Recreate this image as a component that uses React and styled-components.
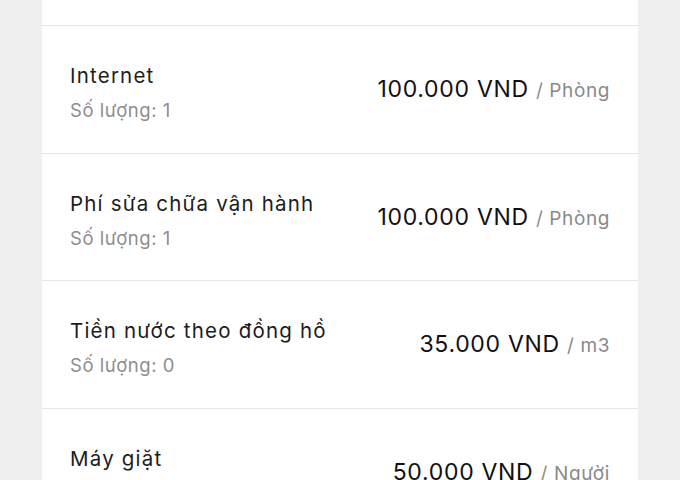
import React from 'react'
import styled, { createGlobalStyle } from 'styled-components'

const GlobalStyle = createGlobalStyle`
  html, body {
    margin: 0;
    padding: 0;
    background: #efefef;
    overflow: hidden;
  }
  body {
    font-family: Inter, "Liberation Sans", sans-serif;
    -webkit-font-smoothing: antialiased;
  }
`

const Page = styled.div`
  width: 680px;
  height: 480px;
  overflow: hidden;
  padding: 0 42px;
  box-sizing: border-box;
`

const Card = styled.div`
  background: #ffffff;
  display: flex;
  flex-direction: column;
`

// bottom edge of the item scrolled above the fold
const TopEdge = styled.div`
  height: 25px;
  border-bottom: 1px solid #e6e6e6;
`

const Row = styled.div`
  height: 126.5px;
  border-bottom: 1px solid #e6e6e6;
  display: flex;
  align-items: center;
  justify-content: space-between;
  padding: 0 28px;
`

const Info = styled.div`
  display: flex;
  flex-direction: column;
  gap: 9px;
  padding-top: 7px;
`

const Title = styled.div`
  font-size: 20.5px;
  letter-spacing: 1.2px;
  color: #1c1c1c;
  line-height: 26px;
`

const Qty = styled.div`
  font-size: 18.5px;
  letter-spacing: 0.55px;
  color: #8e8e8e;
  line-height: 24px;
`

const Price = styled.div`
  font-size: 23px;
  letter-spacing: 0.7px;
  color: #111111;
  white-space: nowrap;
`

const Unit = styled.span`
  font-size: 19px;
  letter-spacing: 0.6px;
  color: #8a8a8a;
`

const fees = [
  { name: 'Internet', qty: 1, price: '100.000 VND', unit: 'Phòng' },
  { name: 'Phí sửa chữa vận hành', qty: 1, price: '100.000 VND', unit: 'Phòng' },
  { name: 'Tiền nước theo đồng hồ', qty: 0, price: '35.000 VND', unit: 'm3' },
  { name: 'Máy giặt', qty: 1, price: '50.000 VND', unit: 'Người' },
]

const App = () => {
  return (
    <>
      <GlobalStyle />
      <Page>
        <Card>
          <TopEdge />
          {fees.map((f) => (
            <Row key={f.name}>
              <Info>
                <Title>{f.name}</Title>
                <Qty>Số lượng: {f.qty}</Qty>
              </Info>
              <Price>
                {f.price} <Unit>/ {f.unit}</Unit>
              </Price>
            </Row>
          ))}
        </Card>
      </Page>
    </>
  )
}

export default App
